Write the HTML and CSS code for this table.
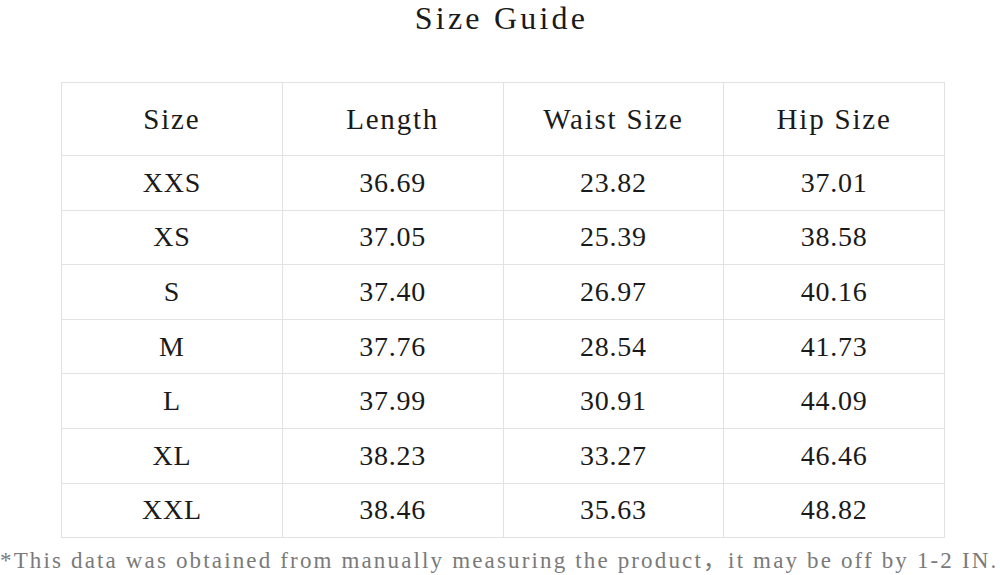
FILE: index.html
```html
<!DOCTYPE html>
<html>
<head>
<meta charset="utf-8">
<link rel="stylesheet" href="styles.css">
</head>
<body>
<div class="page">
  <h1 class="title">Size Guide</h1>
  <table class="guide">
    <thead>
      <tr><th>Size</th><th>Length</th><th>Waist Size</th><th>Hip Size</th></tr>
    </thead>
    <tbody>
      <tr><td class="sz">XXS</td><td>36.69</td><td>23.82</td><td>37.01</td></tr>
      <tr><td class="sz">XS</td><td>37.05</td><td>25.39</td><td>38.58</td></tr>
      <tr><td class="sz">S</td><td>37.40</td><td>26.97</td><td>40.16</td></tr>
      <tr><td class="sz">M</td><td>37.76</td><td>28.54</td><td>41.73</td></tr>
      <tr><td class="sz">L</td><td>37.99</td><td>30.91</td><td>44.09</td></tr>
      <tr><td class="sz">XL</td><td>38.23</td><td>33.27</td><td>46.46</td></tr>
      <tr><td class="sz">XXL</td><td>38.46</td><td>35.63</td><td>48.82</td></tr>
    </tbody>
  </table>
  <p class="note">*This data was obtained from manually measuring the product，it may be off by 1-2 IN.</p>
</div>
</body>
</html>
```
FILE: styles.css
```css
html, body {
  margin: 0;
  padding: 0;
  background: #ffffff;
}
.page {
  width: 1000px;
  height: 575px;
  overflow: hidden;
  font-family: "Liberation Serif", "Noto Sans CJK SC", serif;
  color: #1a1a1a;
}
.title {
  margin: 0;
  font-size: 32px;
  line-height: 36px;
  font-weight: normal;
  letter-spacing: 3.2px;
  text-align: center;
  padding-left: 3px;
}
.guide {
  margin: 46px 0 0 61px;
  width: 884px;
  border-collapse: collapse;
  table-layout: fixed;
}
.guide th,
.guide td {
  border: 1px solid #e2e2e2;
  text-align: center;
  vertical-align: middle;
  padding: 0;
  font-weight: normal;
}
.guide th {
  height: 72px;
  font-size: 29px;
  letter-spacing: 1.8px;
}
.guide td {
  height: 53.6px;
  font-size: 28px;
  letter-spacing: 0.8px;
}
.note {
  margin: 11px 0 0 0;
  font-size: 23px;
  line-height: 24px;
  color: #7a7a7a;
  white-space: nowrap;
  letter-spacing: 2.15px;
}
```
